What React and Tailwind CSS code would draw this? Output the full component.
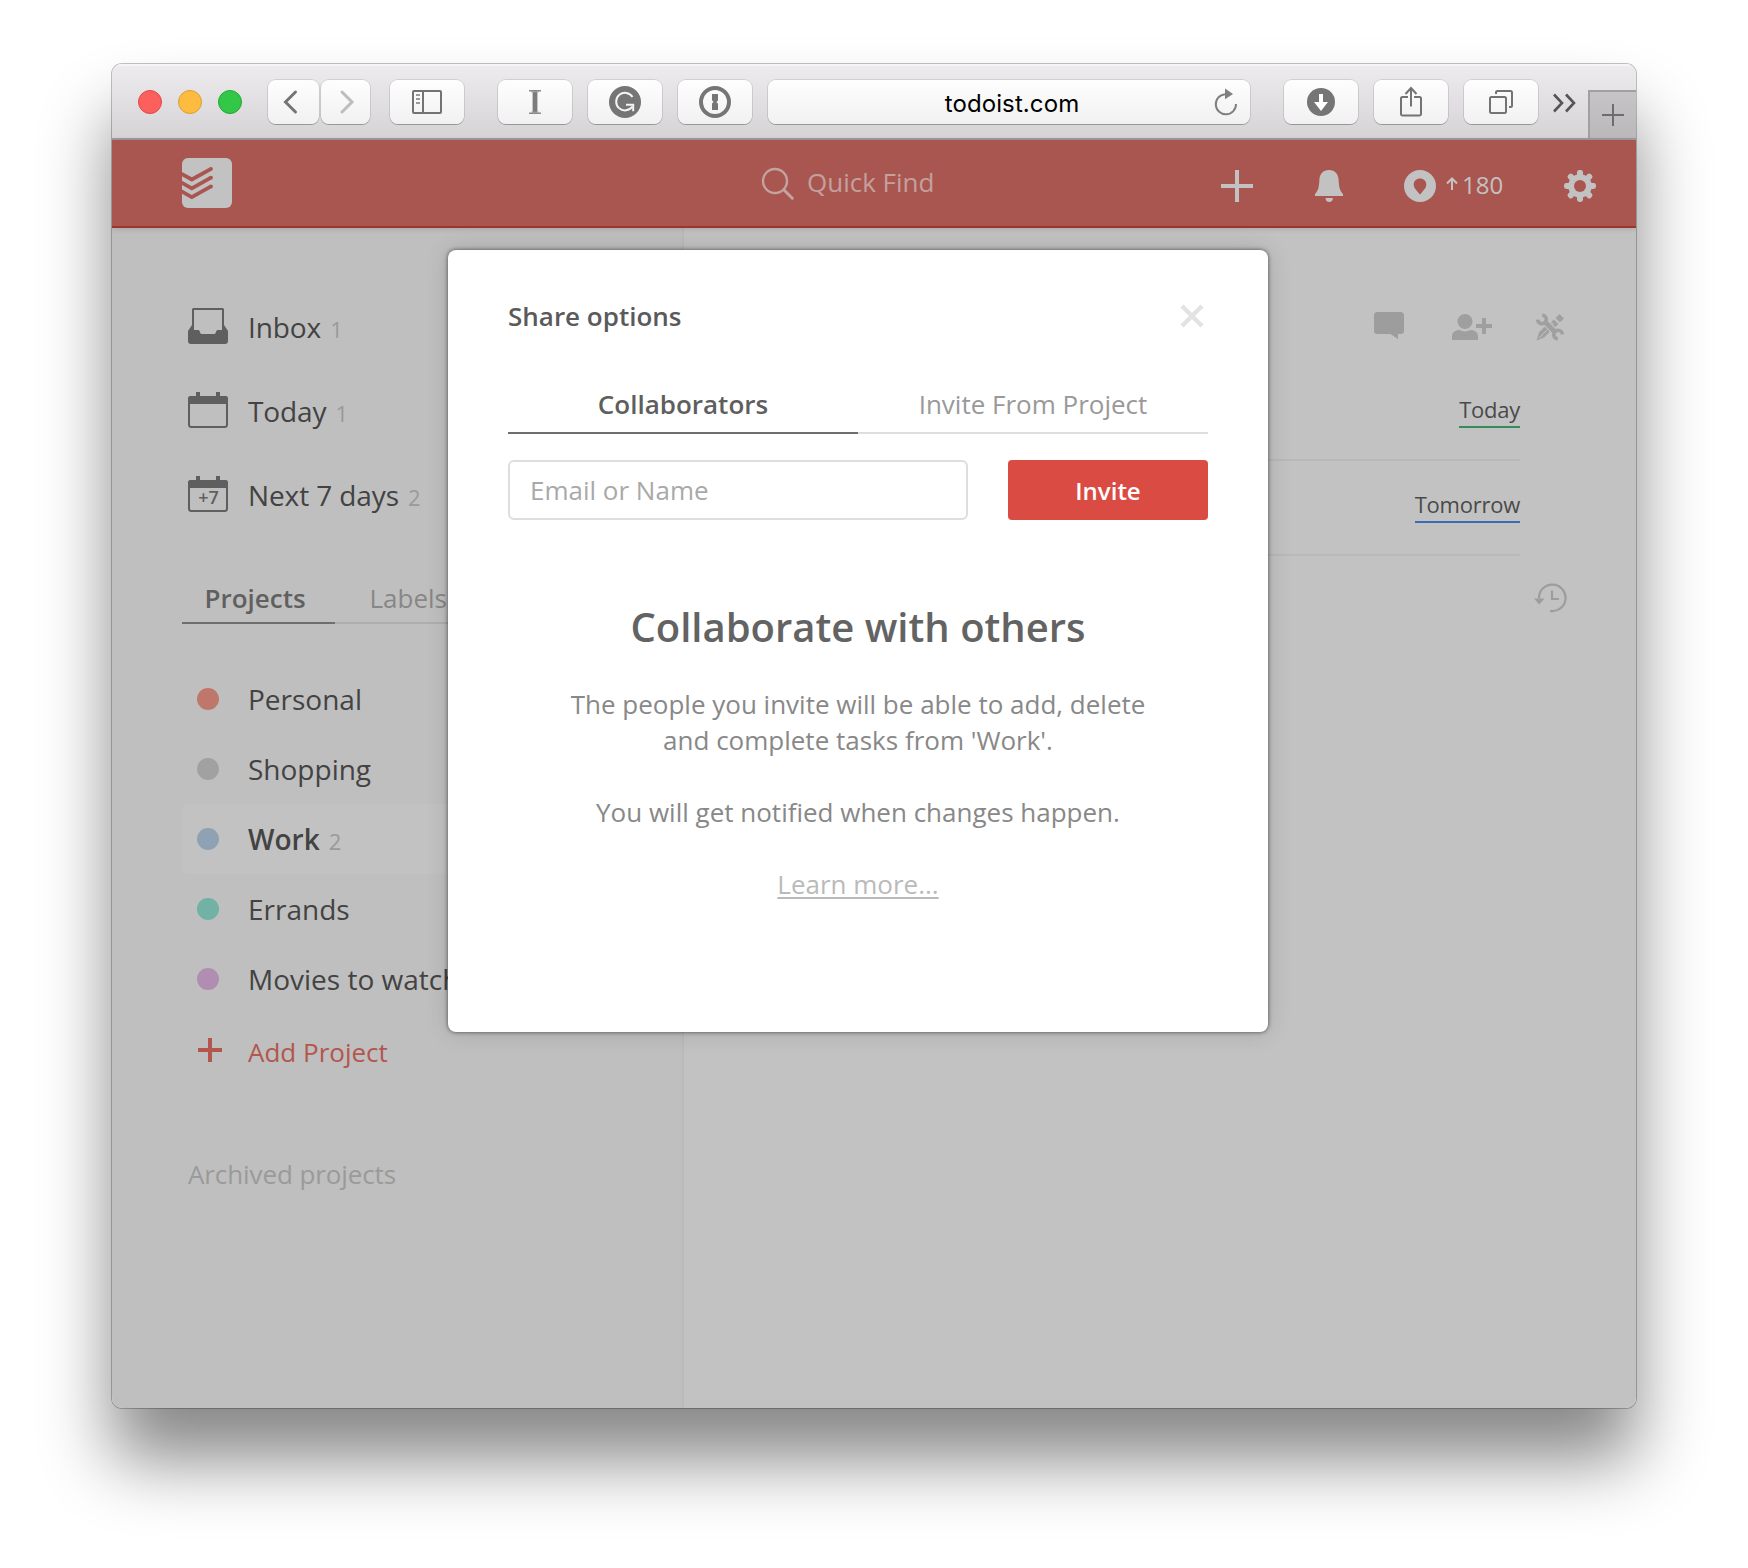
import React from 'react';

/* ---------- browser toolbar ---------- */

function ToolButton({ className = '', children }) {
  return (
    <div
      className={`flex h-11 shrink-0 items-center justify-center rounded-[8px] bg-linear-to-b from-[#fefefe] to-[#f1f1f1] shadow-[0_0_0_1px_rgba(0,0,0,0.10),0_1px_0_0_rgba(0,0,0,0.22)] ${className}`}
    >
      {children}
    </div>
  );
}

function Toolbar() {
  return (
    <div className="flex h-[76px] shrink-0 border-b-2 border-[#9d9ba0] bg-linear-to-b from-[#eeecef] to-[#d5d3d6] shadow-[inset_0_2px_0_#f6f5f6]">
      <div className="mt-4 flex h-11 flex-1 items-center">
        <div className="ml-[26px] flex gap-4">
          <div className="size-6 rounded-full border border-[#df4744] bg-[#fc605c]" />
          <div className="size-6 rounded-full border border-[#dd9c32] bg-[#fdbc40]" />
          <div className="size-6 rounded-full border border-[#24a732] bg-[#33c748]" />
        </div>
        <ToolButton className="ml-[26px] w-[51px]">
          <svg width="16" height="26" viewBox="0 0 16 26" className="mr-2" fill="none" stroke="#757575" strokeWidth="3" strokeLinecap="round">
            <path d="M13.5 3L3.5 13l10 10" />
          </svg>
        </ToolButton>
        <ToolButton className="ml-0.5 w-[49px]">
          <svg width="16" height="26" viewBox="0 0 16 26" className="ml-0.5" fill="none" stroke="#bdbdbd" strokeWidth="3" strokeLinecap="round">
            <path d="M3 3l10 10L3 23" />
          </svg>
        </ToolButton>
        <ToolButton className="ml-5 w-[74px]">
          <svg width="30" height="24" viewBox="0 0 30 24" fill="none" stroke="#737373" strokeWidth="2">
            <rect x="1" y="1" width="28" height="22" rx="1" />
            <path d="M11 1v22" />
            <path d="M4 5h4M4 9h4M4 13h4" stroke="#9a9a9a" />
          </svg>
        </ToolButton>
        <ToolButton className="ml-[34px] w-[74px]">
          <svg width="14" height="26" viewBox="0 0 14 26" fill="none" stroke="#7c7c7c">
            <path d="M7 2v22" strokeWidth="4.8" />
            <path d="M1 1.800h12M1 24.200h12" strokeWidth="1.400" stroke="#8a8a8a" />
            <path d="M3 2.800h8M3 23.200h8" strokeWidth="1" stroke="#a5a5a5" />
          </svg>
        </ToolButton>
        <ToolButton className="ml-4 w-[74px]">
          <svg width="32" height="32" viewBox="0 0 32 32">
            <circle cx="16" cy="16" r="16" fill="#757575" />
            <path d="M23.500 11A8.800 8.800 0 1 0 23.300 20.500" fill="none" stroke="#f4f4f4" strokeWidth="2" />
            <path d="M17 18.800h7.200v6.400" fill="none" stroke="#f4f4f4" strokeWidth="2" />
          </svg>
        </ToolButton>
        <ToolButton className="ml-4 w-[74px]">
          <svg width="32" height="32" viewBox="0 0 32 32">
            <circle cx="16" cy="16" r="14" fill="none" stroke="#757575" strokeWidth="4" />
            <path d="M13 8h6v6.500l-1.600 1.500 1.600 1.800V24h-6v-6.400l1.600-1.600-1.600-1.700z" fill="#757575" />
          </svg>
        </ToolButton>
        <ToolButton className="ml-4 w-[482px]">
          <span className="mt-[3px] ml-[78px] flex-1 text-center font-['Inter',sans-serif] text-2xl tracking-[0.1px] text-black">
            todoist.com
          </span>
          <svg width="24" height="28" viewBox="0 0 24 28" className="mr-3 ml-9" fill="none" stroke="#808080" strokeWidth="2">
            <path d="M11 6.200A10.100 10.100 0 1 0 22 16" />
            <path d="M11 .5L19 6l-8 5.200z" fill="#808080" stroke="none" />
          </svg>
        </ToolButton>
        <ToolButton className="ml-[34px] w-[74px]">
          <svg width="28" height="28" viewBox="0 0 28 28">
            <circle cx="14" cy="14" r="14" fill="#757575" />
            <path d="M12 6h4v8h5l-7 9-7-9h5z" fill="#fff" />
          </svg>
        </ToolButton>
        <ToolButton className="ml-4 w-[74px]">
          <svg width="24" height="32" viewBox="0 0 24 32" fill="none" stroke="#737373" strokeWidth="2">
            <path d="M9 11H3.500a1.500 1.500 0 0 0-1.500 1.500V28a1.500 1.500 0 0 0 1.500 1.500h17A1.500 1.500 0 0 0 22 28V12.500a1.500 1.500 0 0 0-1.500-1.500H15" />
            <path d="M12 20.500V2M6.500 8L12 2l5.500 6" />
          </svg>
        </ToolButton>
        <ToolButton className="ml-4 w-[74px]">
          <svg width="24" height="24" viewBox="0 0 24 24" fill="none" stroke="#737373" strokeWidth="2">
            <rect x="1" y="7" width="16" height="16" rx="1.500" />
            <path d="M7 4V2.500A1.500 1.500 0 0 1 8.500 1h13A1.500 1.500 0 0 1 23 2.500v13a1.500 1.500 0 0 1-1.500 1.500H20" />
          </svg>
        </ToolButton>
        <svg width="24" height="20" viewBox="0 0 24 20" className="mt-0.5 ml-[14px]" fill="none" stroke="#555457" strokeWidth="2.600">
          <path d="M2 1.500l8 8.500-8 8.500M14 1.500l8 8.500-8 8.500" />
        </svg>
      </div>
      <div className="mt-[26px] flex w-12 items-center justify-center border-t-2 border-l-2 border-[#a19fa2] bg-linear-to-b from-[#c6c4c7] to-[#bab8bb]">
        <svg width="22" height="22" viewBox="0 0 22 22" stroke="#6d6c6e" strokeWidth="2">
          <path d="M11 0v22M0 11h22" />
        </svg>
      </div>
    </div>
  );
}

/* ---------- red app header ---------- */

function Header() {
  return (
    <div className="relative flex h-[88px] shrink-0 items-start border-b-2 border-[#9d352c] bg-[#aa5650] text-[#c2c2c2] shadow-[0_1px_5px_rgba(0,0,0,0.14)]">
      <svg width="50" height="50" viewBox="0 0 50 50" className="mt-[18px] ml-[70px]">
        <rect width="50" height="50" rx="6" fill="#c2c2c2" />
        <g fill="none" stroke="#aa5650" strokeWidth="3.800" strokeLinejoin="round">
          <path d="M-2 15l11.800 6.500L29 10.800" />
          <path d="M-2 23.800l11.800 6.500L29 19.600" />
          <path d="M-2 32.600l11.800 6.500L29 28.400" />
        </g>
        <g fill="#aa5650">
          <circle cx="29" cy="10.800" r="1.900" />
          <circle cx="29" cy="19.600" r="1.900" />
          <circle cx="29" cy="28.400" r="1.900" />
        </g>
      </svg>
      <svg width="34" height="34" viewBox="0 0 34 34" className="mt-[27px] ml-[529px]" fill="none" stroke="#c3a3a1" strokeLinecap="round">
        <circle cx="14" cy="14" r="12" strokeWidth="2.400" />
        <path d="M22.800 22.800l8.500 8.500" strokeWidth="3" />
      </svg>
      <span className="mt-6 ml-3 w-[414px] text-[26px] leading-9 text-[#c3a09e]">Quick Find</span>
      <svg width="32" height="32" viewBox="0 0 32 32" className="mt-[30px]" stroke="#c2c2c2" strokeWidth="4">
        <path d="M16 0v32M0 16h32" />
      </svg>
      <svg width="28" height="32" viewBox="0 0 28 32" className="mt-[30px] ml-[62px]" fill="#c2c2c2">
        <path d="M14 0c6 0 9.200 4 9.600 9.500C24 17 24.600 20.500 28 24v2H0v-2c3.400-3.500 4-7 4.400-14.500C4.800 4 8 0 14 0zM10.500 28h7.500c-.2 2.600-1.600 4-3.800 4s-3.500-1.400-3.700-4z" />
      </svg>
      <svg width="32" height="32" viewBox="0 0 32 32" className="mt-[30px] ml-[61px]">
        <path fillRule="evenodd" fill="#c2c2c2" d="M16 0a16 16 0 1 1 0 32 16 16 0 0 1 0-32zM16 8.500c-3.700 0-6.300 2.600-6.300 6 0 3.300 3 6.300 6.300 10 3.300-3.700 6.300-6.700 6.300-10 0-3.400-2.600-6-6.300-6z" />
      </svg>
      <svg width="12" height="14" viewBox="0 0 12 14" className="mt-[37px] ml-2.5" fill="none" stroke="#c9c2c2" strokeWidth="2">
        <path d="M6 13V2M1 6.500l5-5 5 5" />
      </svg>
      <span className="mt-[29px] ml-1 w-[102px] text-2xl leading-8 font-medium">180</span>
      <svg width="32" height="32" viewBox="0 0 32 32" className="mt-[30px]">
        <g fill="#c2c2c2">
          {[0, 45, 90, 135].map((a) => (
            <rect key={a} x="13" y="0" width="6" height="32" rx="2.400" transform={`rotate(${a} 16 16)`} />
          ))}
          <circle cx="16" cy="16" r="11.800" />
        </g>
        <circle cx="16" cy="16" r="6" fill="#aa5650" />
      </svg>
    </div>
  );
}

/* ---------- sidebar ---------- */

function InboxIcon() {
  return (
    <svg width="40" height="36" viewBox="0 0 40 36">
      <path d="M5 22V1.500Q5 1 5.500 1h29q.5 0 .5.5V22" fill="none" stroke="#5f5f5f" strokeWidth="2" />
      <path d="M4 17L0 23v10a3 3 0 0 0 3 3h34a3 3 0 0 0 3-3V23l-4-6v5h-6.500c-1.600 0-1.500 4-3 4h-13c-1.500 0-1.400-4-3-4H4z" fill="#5f5f5f" />
    </svg>
  );
}

function CalendarIcon({ label }) {
  return (
    <svg width="40" height="36" viewBox="0 0 40 36">
      <rect x="1" y="5" width="38" height="30" rx="2.500" fill="none" stroke="#5f5f5f" strokeWidth="2" />
      <path d="M0 12V6.500A2.500 2.500 0 0 1 2.500 4H8V0h4v4h16V0h4v4h5.500A2.500 2.500 0 0 1 40 6.500V12z" fill="#5f5f5f" />
      {label && (
        <text x="20.500" y="28" textAnchor="middle" fontSize="18" fontWeight="600" fill="#5f5f5f">
          {label}
        </text>
      )}
    </svg>
  );
}

const filters = [
  { name: 'Inbox', count: 1, icon: <InboxIcon /> },
  { name: 'Today', count: 1, icon: <CalendarIcon /> },
  { name: 'Next 7 days', count: 2, icon: <CalendarIcon label="+7" /> },
];

const projects = [
  { name: 'Personal', color: 'bg-[#bf776b]' },
  { name: 'Shopping', color: 'bg-[#a1a1a1]' },
  { name: 'Work', color: 'bg-[#8fa2b3]', count: 2, active: true },
  { name: 'Errands', color: 'bg-[#72b1a5]' },
  { name: 'Movies to watch', color: 'bg-[#b18eb1]' },
];

function Sidebar() {
  return (
    <div className="w-[572px] shrink-0 border-r-2 border-[#bababa] bg-[#bfbfbf] pt-[57px] pl-[70px]">
      {filters.map((f) => (
        <div key={f.name} className="flex h-[84px] items-center pl-1.5 text-[28px] tracking-[-0.1px] text-[#434343]">
          <div className="-mt-0.5 mr-5">{f.icon}</div>
          <span className="leading-[38px]">{f.name}</span>
          <span className="mt-1 ml-[9px] text-[22px] leading-[30px] text-[#9a9a9a]">{f.count}</span>
        </div>
      ))}
      <div className="mt-[39px] flex h-12 text-[26px] leading-9">
        <div className="w-[153px] border-b-2 border-[#6e6e6e] pt-1 pl-[22.500px] font-semibold text-[#606060]">Projects</div>
        <div className="flex-1 border-b-2 border-[#aeaeae] pt-1 pl-[34.500px] text-[#878787]">Labels</div>
      </div>
      <div className="mt-10">
        {projects.map((p) => (
          <div
            key={p.name}
            className={`flex h-[70px] items-center rounded-l-md pl-[15px] text-[28px] text-[#434343] ${p.active ? 'bg-[#c2c2c2]' : ''}`}
          >
            <div className={`mr-[29px] size-[22px] shrink-0 rounded-full ${p.color}`} />
            <span className={`leading-[38px] ${p.active ? 'font-semibold' : ''}`}>{p.name}</span>
            {p.count && <span className="mt-1 ml-[9px] text-[22px] leading-[30px] text-[#9a9a9a]">{p.count}</span>}
          </div>
        ))}
      </div>
      <div className="mt-5 flex text-[26px] leading-9 text-[#b3564d]">
        <svg width="24" height="24" viewBox="0 0 24 24" className="mt-1 mr-[26px] ml-4" stroke="#b3564d" strokeWidth="4">
          <path d="M12 0v24M0 12h24" />
        </svg>
        Add Project
      </div>
      <div className="mt-[86px] ml-1.5 text-[26px] leading-9 tracking-[-0.1px] text-[#9a9a9a]">Archived projects</div>
    </div>
  );
}

/* ---------- task list ---------- */

function Task({ due, line }) {
  return (
    <div className="flex h-[95px] items-start justify-end border-b-2 border-[#b9b9b9] pt-7">
      <span className={`border-b-2 pb-0.5 text-[22px] leading-[30px] tracking-[-0.240px] text-[#4a4a4a] ${line}`}>{due}</span>
    </div>
  );
}

function TaskPane() {
  return (
    <div className="flex-1 bg-[#c2c2c2] pl-[58px]">
      <div className="flex h-[138px] items-start justify-end pr-[72px]">
        <svg width="30" height="28" viewBox="0 0 30 28" className="mt-[84px]" fill="#9d9d9d">
          <path d="M3.500 0h23A3.500 3.500 0 0 1 30 3.500v15a3.500 3.500 0 0 1-3.500 3.500H24v5l-7.500-5h-13A3.500 3.500 0 0 1 0 18.500v-15A3.500 3.500 0 0 1 3.500 0z" />
        </svg>
        <svg width="40" height="28" viewBox="0 0 40 28" className="mt-[85px] ml-12" fill="#9f9f9f">
          <circle cx="13" cy="8.500" r="7.500" />
          <path d="M0 27v-4c0-3.500 3.500-6 7-6 1.500 0 3 1.500 6 1.500s4.500-1.500 6-1.500c3.500 0 7 2.500 7 6v4z" />
          <path d="M24 11h6V5h4v6h6v4h-6v6h-4v-6h-6z" />
        </svg>
        <svg width="28" height="28" viewBox="0 0 28 28" className="mt-[85px] ml-11">
          <path d="M.5 27.500L3.200 19l6.300-6 5 5-6.300 6.500z" fill="#a0a0a0" />
          <path d="M14.200 10.200l3.700-3.700 4.500 4.500-3.700 3.700zM19.500 5l4-4 4.500 4.500-4 4z" fill="#a0a0a0" />
          <path d="M3 25l8-8M15.500 9.500l2 2" stroke="#c2c2c2" strokeWidth="1" />
          <path d="M7.500 7.500l13 13" stroke="#c2c2c2" strokeWidth="7" />
          <path d="M8 8l12 12" stroke="#a0a0a0" strokeWidth="5" />
          <path d="M6.200 2.200a4.300 4.300 0 1 1-4.500 4.500" fill="none" stroke="#a0a0a0" strokeWidth="3.600" />
          <path d="M21.800 25.800a4.300 4.300 0 1 1 4.500-4.500" fill="none" stroke="#a0a0a0" strokeWidth="3.600" />
        </svg>
      </div>
      <div className="mr-[116px]">
        <Task due="Today" line="border-[#358b5c]" />
        <Task due="Tomorrow" line="border-[#3a6cb4]" />
      </div>
      <div className="flex justify-end pt-[27px] pr-[69px]">
        <svg width="33" height="30" viewBox="0 0 33 30" fill="none" stroke="#9d9d9d" strokeWidth="2.200">
          <path d="M5 15.500a13.300 13.300 0 1 1 11 12.500" />
          <path d="M18 7.500V16h7" />
          <path d="M0 15.500h10.500L5.200 21.500z" fill="#9d9d9d" stroke="none" />
        </svg>
      </div>
    </div>
  );
}

/* ---------- share dialog ---------- */

function ShareDialog() {
  return (
    <div className="absolute top-[186px] left-[336px] h-[782px] w-[820px] rounded-[8px] bg-white px-[60px] text-[26px] shadow-[0_0_4px_rgba(0,0,0,0.6),0_0_24px_rgba(0,0,0,0.14)]">
      <div className="flex justify-between pt-12 leading-9">
        <span className="font-semibold text-[#5a5a5a]">Share options</span>
        <svg width="24" height="24" viewBox="0 0 24 24" className="mt-1.5 mr-1" stroke="#e3e3e3" strokeWidth="4.500">
          <path d="M2 2l20 20M22 2L2 22" />
        </svg>
      </div>
      <div className="mt-[52px] flex h-12 text-center leading-9">
        <div className="w-1/2 border-b-2 border-[#6e6e6e] font-semibold text-[#5e5e5e]">Collaborators</div>
        <div className="w-1/2 border-b-2 border-[#dedede] text-[#999999]">Invite From Project</div>
      </div>
      <div className="mt-[26px] flex h-[60px] gap-10">
        <div className="flex flex-1 items-center rounded-md border-2 border-[#dedede] pt-px pl-5 text-[#a9a9a9]">Email or Name</div>
        <button className="w-[200px] rounded-[4px] bg-[#da4c43] pt-px text-2xl font-semibold text-white">Invite</button>
      </div>
      <div className="mt-[79px] text-center leading-9 text-[#888888]">
        <h2 className="text-[40px] leading-[55px] font-semibold text-[#636363]">Collaborate with others</h2>
        <p className="mt-8">
          The people you invite will be able to add, delete
          <br />
          and complete tasks from 'Work'.
        </p>
        <p className="mt-9">You will get notified when changes happen.</p>
        <p className="mt-9 text-[#bababa]">
          <a className="underline decoration-2 underline-offset-[3px] [text-decoration-skip-ink:none]">Learn more...</a>
        </p>
      </div>
    </div>
  );
}

export default function App() {
  return (
    <div className="h-[1568px] w-[1748px] overflow-hidden bg-white pt-16 pl-28 font-['Open_Sans',sans-serif]">
      <div className="relative h-[1344px] w-[1524px] rounded-[10px] shadow-[0_0_0_1px_rgba(0,0,0,0.24),0_52px_70px_rgba(0,0,0,0.47)]">
        <div className="flex h-full flex-col overflow-hidden rounded-[10px]">
          <Toolbar />
          <Header />
          <div className="flex flex-1">
            <Sidebar />
            <TaskPane />
          </div>
        </div>
        <ShareDialog />
      </div>
    </div>
  );
}
